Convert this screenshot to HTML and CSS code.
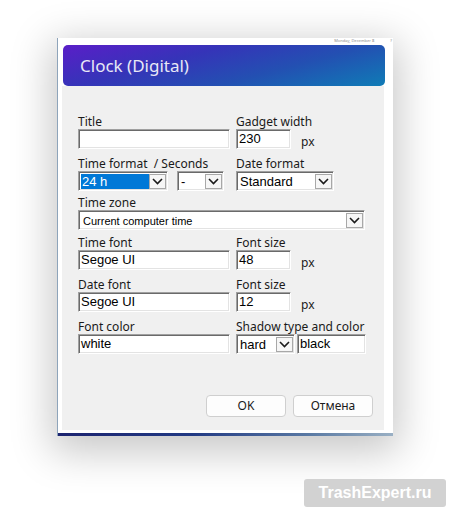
FILE: index.html
```html
<!DOCTYPE html>
<html>
<head>
<meta charset="utf-8">
<link rel="stylesheet" href="styles.css">
</head>
<body>
<div class="page">
  <div class="window">
    <div class="topstrip"><span class="date">Monday, December 8</span><span class="q">?</span></div>
    <div class="header"><h1 class="title">Clock (Digital)</h1></div>
    <div class="content">
      <div class="form">
        <div class="field">
          <div class="label">Title</div>
          <div class="input w-wide"></div>
        </div>
        <div class="field">
          <div class="label">Gadget width</div>
          <div class="unit-row"><div class="input w-num">230</div><span class="unit">px</span></div>
        </div>

        <div class="field r2">
          <div class="label">Time format &nbsp;/ Seconds</div>
          <div class="pair">
            <div class="select w-tf"><span class="val selected">24 h</span><span class="arrow"><svg width="13" height="9" viewBox="0 0 13 9"><polyline points="2,2 6.5,6.5 11,2" fill="none" stroke="#1a1a1a" stroke-width="1.6"/></svg></span></div>
            <div class="select w-sec"><span class="val">-</span><span class="arrow"><svg width="13" height="9" viewBox="0 0 13 9"><polyline points="2,2 6.5,6.5 11,2" fill="none" stroke="#1a1a1a" stroke-width="1.6"/></svg></span></div>
          </div>
        </div>
        <div class="field r2">
          <div class="label">Date format</div>
          <div class="select w-df"><span class="val">Standard</span><span class="arrow"><svg width="13" height="9" viewBox="0 0 13 9"><polyline points="2,2 6.5,6.5 11,2" fill="none" stroke="#1a1a1a" stroke-width="1.6"/></svg></span></div>
        </div>

        <div class="field span r3">
          <div class="label">Time zone</div>
          <div class="select w-tz"><span class="val small">Current computer time</span><span class="arrow"><svg width="13" height="9" viewBox="0 0 13 9"><polyline points="2,2 6.5,6.5 11,2" fill="none" stroke="#1a1a1a" stroke-width="1.6"/></svg></span></div>
        </div>

        <div class="field r4">
          <div class="label">Time font</div>
          <div class="input w-wide">Segoe UI</div>
        </div>
        <div class="field r4">
          <div class="label">Font size</div>
          <div class="unit-row"><div class="input w-num">48</div><span class="unit">px</span></div>
        </div>

        <div class="field r5">
          <div class="label">Date font</div>
          <div class="input w-wide">Segoe UI</div>
        </div>
        <div class="field r5">
          <div class="label">Font size</div>
          <div class="unit-row"><div class="input w-num">12</div><span class="unit">px</span></div>
        </div>

        <div class="field r5">
          <div class="label">Font color</div>
          <div class="input w-wide">white</div>
        </div>
        <div class="field r5">
          <div class="label">Shadow type and color</div>
          <div class="pair tight">
            <div class="select w-sh"><span class="val">hard</span><span class="arrow"><svg width="13" height="9" viewBox="0 0 13 9"><polyline points="2,2 6.5,6.5 11,2" fill="none" stroke="#1a1a1a" stroke-width="1.6"/></svg></span></div>
            <div class="input w-col">black</div>
          </div>
        </div>
      </div>
      <div class="buttons">
        <div class="btn">OK</div>
        <div class="btn">Отмена</div>
      </div>
    </div>
    <div class="gap"></div>
    <div class="bottomline"></div>
  </div>
  <div class="watermark">TrashExpert.ru</div>
</div>
</body>
</html>
```

FILE: styles.css
```css
html, body {
  margin: 0;
  padding: 0;
  background: #ffffff;
}

.page {
  width: 451px;
  height: 513px;
  position: relative;
  overflow: hidden;
  padding: 38px 0 0 57px;
  box-sizing: border-box;
  font-family: "Noto Sans", "Liberation Sans", sans-serif;
}

.window {
  width: 336px;
  height: 398px;
  box-sizing: border-box;
  background: #ffffff;
  border-left: 1px solid #8ea4ba;
  display: flex;
  flex-direction: column;
  box-shadow: 0 10px 38px 6px rgba(0, 0, 0, 0.22);
}

.topstrip {
  height: 7px;
  display: flex;
  justify-content: flex-end;
  align-items: flex-start;
  font-size: 4px;
  line-height: 5px;
  color: #8a8a8a;
  padding-right: 0;
}

.topstrip .date {
  margin-right: 16px;
}

.topstrip .q {
  margin-right: 1px;
}

.header {
  height: 41px;
  margin-left: 5px;
  width: 322px;
  border-radius: 5px;
  background: linear-gradient(165deg, #5a1ec8 0%, #3534b8 35%, #2350b2 65%, #0f7cb6 100%);
  display: flex;
  align-items: center;
  padding-left: 17px;
  box-sizing: border-box;
}

.title {
  margin: 0;
  font-weight: normal;
  font-size: 17px;
  color: #e8e8f6;
  line-height: 20px;
  padding-top: 1px;
}

.content {
  height: 344px;
  margin-left: 4px;
  width: 322px;
  background: #f0f0f0;
  box-sizing: border-box;
  padding: 29px 0 0 16px;
  display: flex;
  flex-direction: column;
}

.form {
  display: grid;
  grid-template-columns: 152px 1fr;
  column-gap: 6px;
}

.field {
  display: flex;
  flex-direction: column;
}

.field.span {
  grid-column: 1 / span 2;
}

.r2 { margin-top: 8px; }
.r3 { margin-top: 5px; }
.r4 { margin-top: 6px; }
.r5 { margin-top: 8px; }

.label {
  font-size: 12px;
  line-height: 14px;
  height: 14px;
  color: #1a1a1a;
  white-space: pre;
}

.input, .select {
  height: 20px;
  box-sizing: border-box;
  background: #ffffff;
  border: 1px solid;
  border-color: #a0a0a0 #ffffff #ffffff #a0a0a0;
  box-shadow: inset 1px 1px 0 #6a6a6a, inset -1px -1px 0 #e3e3e3;
  font-family: "Liberation Sans", Arial, sans-serif;
  font-size: 13px;
  line-height: 18px;
  color: #000;
}

.input {
  padding: 0 0 0 2px;
}

.w-wide { width: 152px; }
.w-num { width: 55px; }
.w-tf { width: 90px; }
.w-sec { width: 47px; }
.w-df { width: 98px; }
.w-tz { width: 287px; }
.w-sh { width: 59px; }
.w-col { width: 69px; }

.unit-row {
  display: flex;
  align-items: flex-end;
}

.unit {
  font-size: 12px;
  line-height: 14px;
  margin-left: 10px;
  color: #1a1a1a;
}

.pair {
  display: flex;
  gap: 9px;
}

.pair.tight {
  gap: 2px;
}

.select {
  display: flex;
  padding: 2px 1px 1px 2px;
}

.select .val {
  flex: 1;
  line-height: 16px;
  padding-left: 1px;
  white-space: nowrap;
  overflow: hidden;
}

.select .val.selected {
  background: #0078d7;
  color: #ffffff;
}

.select .val.small {
  font-size: 11px;
  padding-left: 2px;
}

.select .arrow {
  width: 17px;
  box-sizing: border-box;
  border: 1px solid #a8a8a8;
  background: #f6f6f6;
  display: flex;
  align-items: center;
  justify-content: center;
}

.buttons {
  margin-top: auto;
  display: flex;
  justify-content: flex-end;
  gap: 7px;
  padding: 0 11px 13px 0;
}

.btn {
  width: 80px;
  height: 22px;
  box-sizing: border-box;
  border: 1px solid #cfcfcf;
  border-radius: 4px;
  background: #fdfdfd;
  font-size: 12px;
  line-height: 20px;
  text-align: center;
  color: #1a1a1a;
}

.gap {
  height: 3px;
}

.bottomline {
  height: 3px;
  background: linear-gradient(90deg, #1c2470 0%, #223a84 40%, #5a7aa4 75%, #9ab0c4 100%);
}

.watermark {
  position: absolute;
  left: 304px;
  top: 479px;
  width: 142px;
  height: 28px;
  border-radius: 3px;
  background: #d2d2d2;
  color: #ffffff;
  font-family: "Liberation Sans", Arial, sans-serif;
  font-weight: bold;
  font-size: 16px;
  line-height: 28px;
  text-align: center;
}
```
